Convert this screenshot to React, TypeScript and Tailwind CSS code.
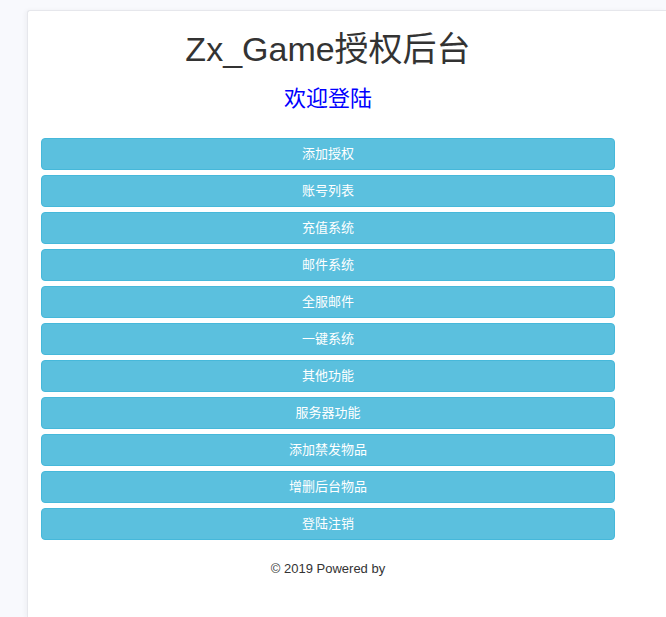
import React from 'react';

const menu = [
  '添加授权',
  '账号列表',
  '充值系统',
  '邮件系统',
  '全服邮件',
  '一键系统',
  '其他功能',
  '服务器功能',
  '添加禁发物品',
  '增删后台物品',
  '登陆注销',
];

const font = { fontFamily: '"Liberation Sans", "Noto Sans CJK SC", sans-serif' };

export default function App() {
  return (
    <div className="min-h-[617px] bg-[#f8f9fd] pt-[10px] pl-[27px] flex" style={font}>
      <div className="flex-1 bg-white rounded-tl-[3px] border-l border-t border-[#e6e7ec] shadow-[-2px_0_4px_rgba(0,0,0,0.04)] min-h-[607px]">
        <div className="w-[574px] ml-[13px] pt-[18px] pb-10 flex flex-col">
          <h1 className="text-center text-[34px] leading-[40px] text-[#333]">Zx_Game授权后台</h1>
          <h3 className="mt-[16px] text-center text-[22px] leading-[28px] text-[#0000ff]">欢迎登陆</h3>
          <div className="mt-[25px] flex flex-col gap-[5px]">
            {menu.map((item) => (
              <button
                key={item}
                className="h-[32px] w-full rounded-[4px] border border-[#46b8da] bg-[#5bc0de] text-[13px] text-white"
              >
                {item}
              </button>
            ))}
          </div>
          <p className="mt-[20px] text-center text-[13px] leading-[18px] text-[#333]">© 2019 Powered by</p>
        </div>
      </div>
    </div>
  );
}
